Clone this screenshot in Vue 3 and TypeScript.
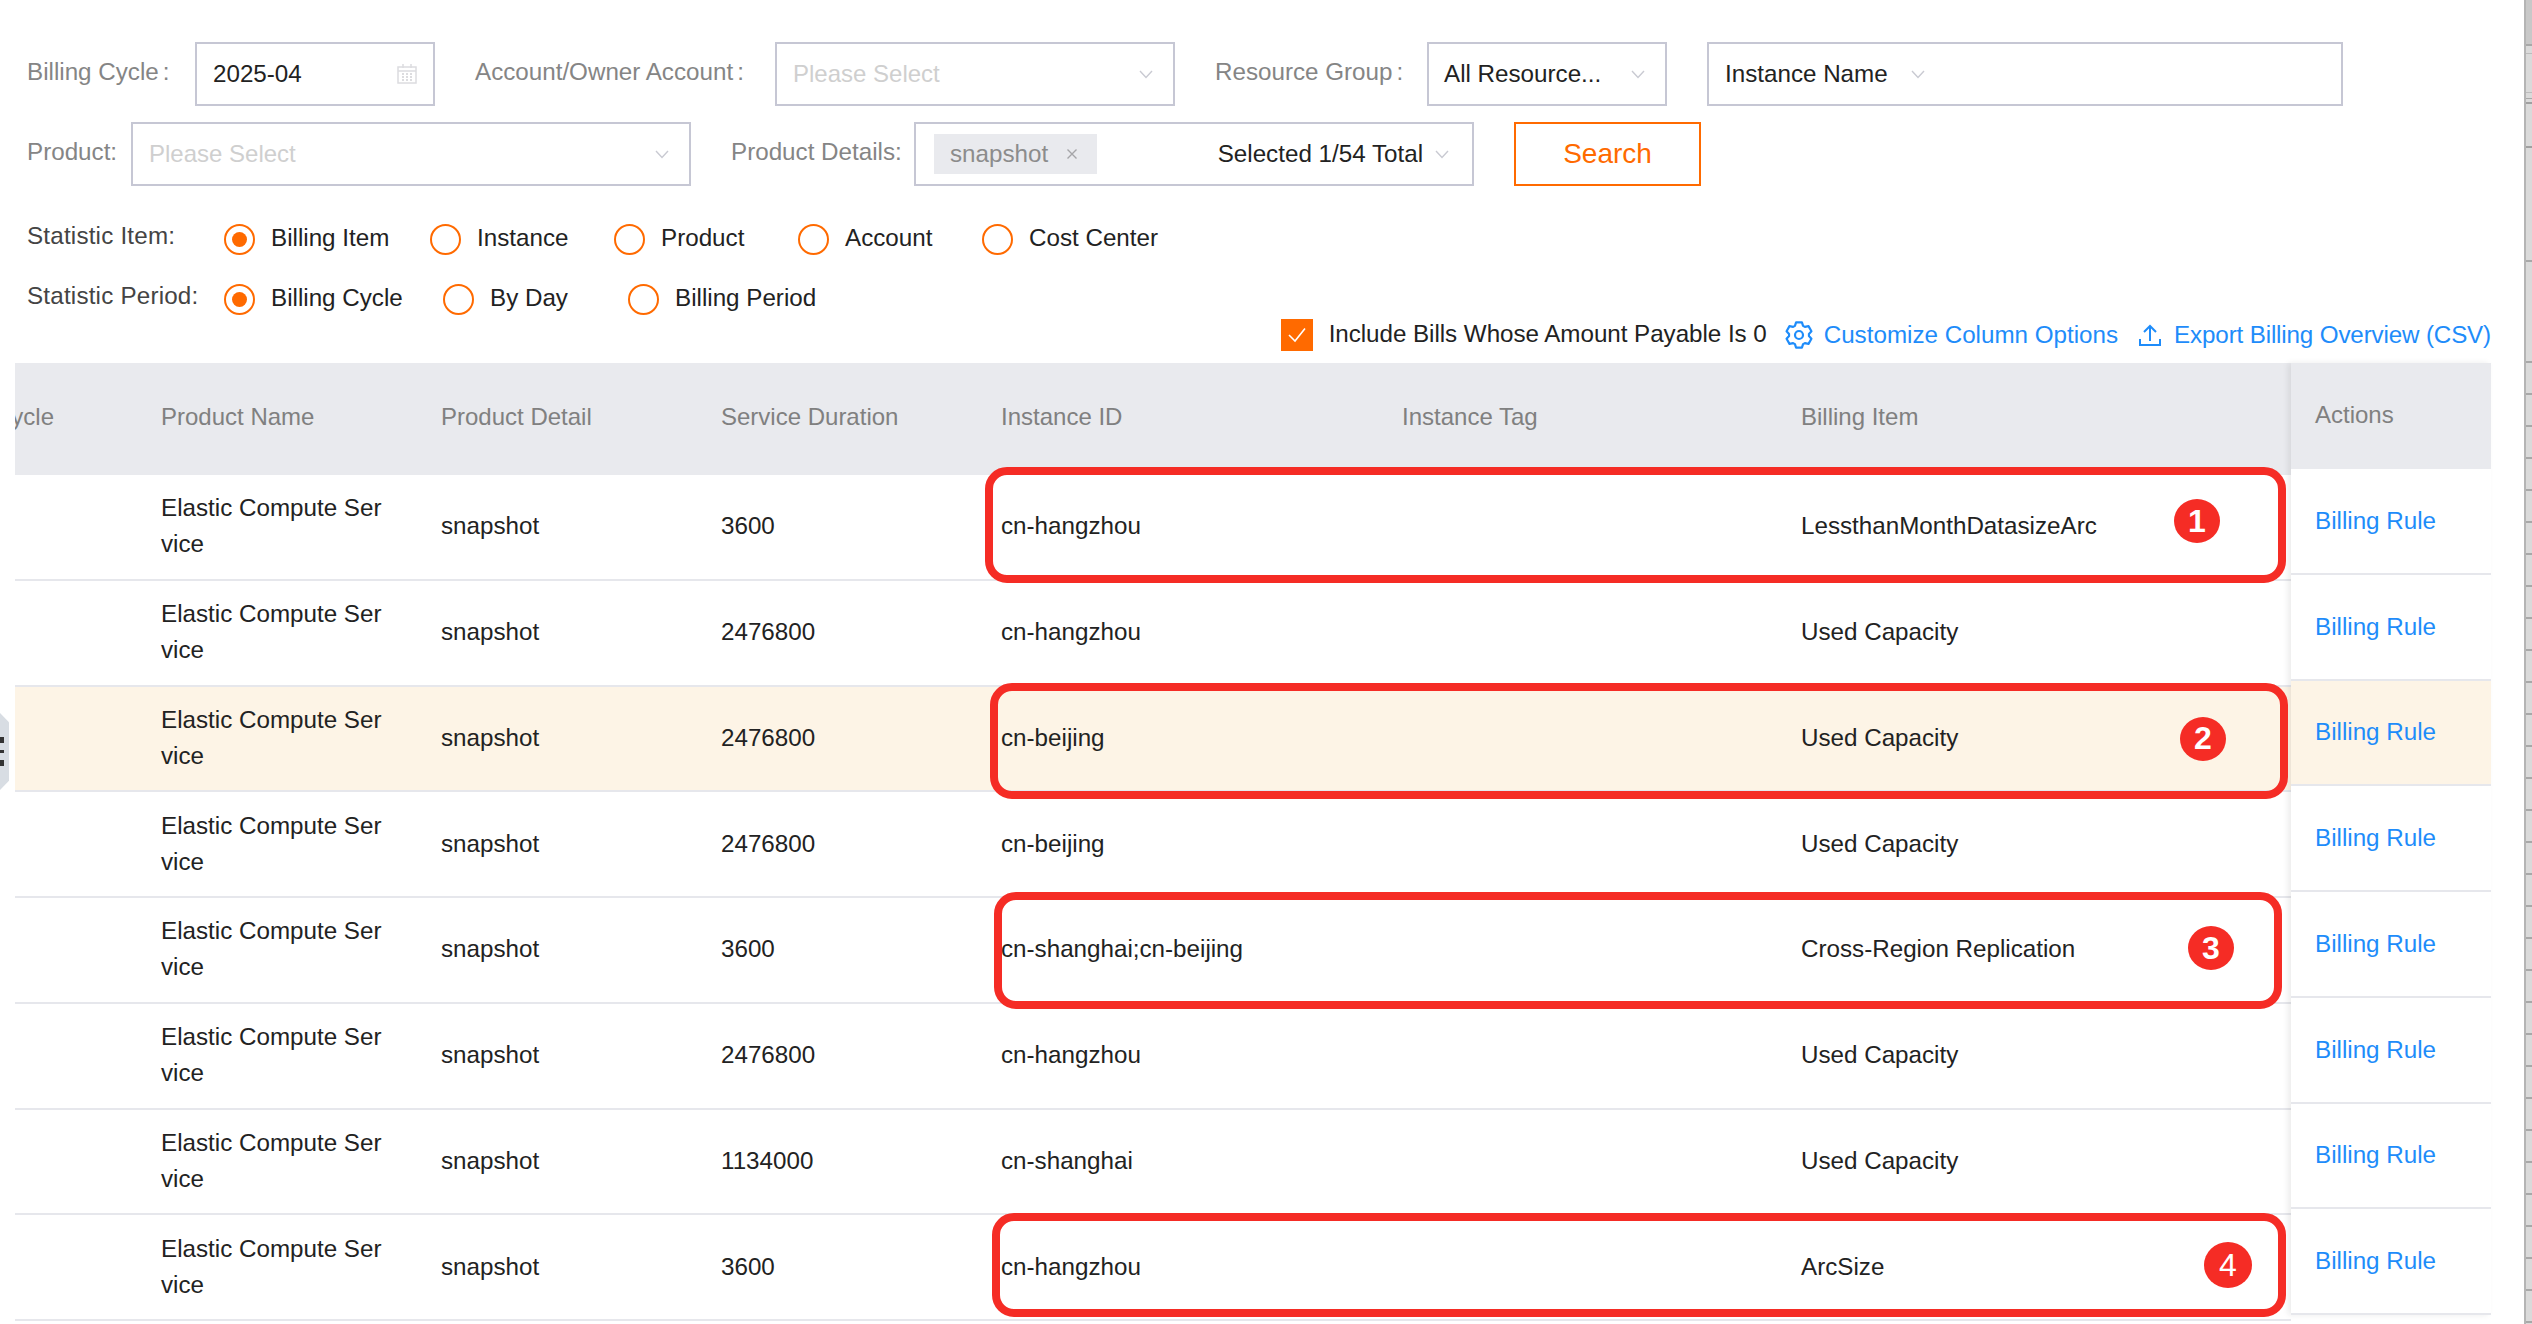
<script setup lang="ts">
interface Row {
  duration: string
  instance: string
  item: string
  active?: boolean
}

const rows: Row[] = [
  { duration: '3600', instance: 'cn-hangzhou', item: 'LessthanMonthDatasizeArc' },
  { duration: '2476800', instance: 'cn-hangzhou', item: 'Used Capacity' },
  { duration: '2476800', instance: 'cn-beijing', item: 'Used Capacity', active: true },
  { duration: '2476800', instance: 'cn-beijing', item: 'Used Capacity' },
  { duration: '3600', instance: 'cn-shanghai;cn-beijing', item: 'Cross-Region Replication' },
  { duration: '2476800', instance: 'cn-hangzhou', item: 'Used Capacity' },
  { duration: '1134000', instance: 'cn-shanghai', item: 'Used Capacity' },
  { duration: '3600', instance: 'cn-hangzhou', item: 'ArcSize' },
]

const statisticItems = ['Billing Item', 'Instance', 'Product', 'Account', 'Cost Center']
const statisticPeriods = ['Billing Cycle', 'By Day', 'Billing Period']

// 截图上的红色标注框
const marks = [
  { n: 1, cls: 'mark-1' },
  { n: 2, cls: 'mark-2' },
  { n: 3, cls: 'mark-3' },
  { n: 4, cls: 'mark-4' },
]

// 六齿齿轮
function gearPath(cx: number, cy: number, outer: number, inner: number): string {
  const pt = (deg: number, r: number) => {
    const a = (deg * Math.PI) / 180
    return `${(cx + r * Math.cos(a)).toFixed(2)} ${(cy + r * Math.sin(a)).toFixed(2)}`
  }
  const parts: string[] = []
  for (let i = 0; i < 6; i++) {
    const c = -90 + i * 60
    parts.push(`${i === 0 ? 'M' : 'L'}${pt(c - 24, inner)}`)
    parts.push(`L${pt(c - 13, outer)}`)
    parts.push(`L${pt(c + 13, outer)}`)
    parts.push(`L${pt(c + 24, inner)}`)
  }
  return parts.join(' ') + 'Z'
}

const gear = gearPath(14, 14, 13, 10)
</script>

<template>
  <div class="page">
    <div class="form-row">
      <label class="label w-cycle">Billing Cycle<span class="colon">:</span></label>
      <div class="field w-240">
        <span class="value">2025-04</span>
        <svg class="cal" width="20" height="20" viewBox="0 0 20 20" fill="none" stroke="#dcdcdf" stroke-width="1.5">
          <rect x="1" y="3" width="18" height="16" />
          <path d="M1 7h18M6 0v4M14 0v4" />
          <path d="M5 10h2M9 10h2M13 10h2M5 13h2M9 13h2M13 13h2M5 16h2M9 16h2M13 16h2" stroke-width="2" />
        </svg>
      </div>
      <label class="label w-account">Account/Owner Account<span class="colon">:</span></label>
      <div class="field w-400">
        <span class="placeholder">Please Select</span>
        <svg class="chev" width="14" height="9" viewBox="0 0 14 9"><path d="M1 1l6 6.500L13 1" /></svg>
      </div>
      <label class="label w-group">Resource Group<span class="colon">:</span></label>
      <div class="field w-240 compact">
        <span class="value">All Resource...</span>
        <svg class="chev" width="14" height="9" viewBox="0 0 14 9"><path d="M1 1l6 6.500L13 1" /></svg>
      </div>
      <div class="field w-name">
        <span class="value">Instance Name</span>
        <svg class="chev chev-inline" width="14" height="9" viewBox="0 0 14 9"><path d="M1 1l6 6.500L13 1" /></svg>
      </div>
    </div>

    <div class="form-row second">
      <label class="label w-product">Product:</label>
      <div class="field w-560">
        <span class="placeholder">Please Select</span>
        <svg class="chev" width="14" height="9" viewBox="0 0 14 9"><path d="M1 1l6 6.500L13 1" /></svg>
      </div>
      <label class="label w-details">Product Details:</label>
      <div class="field w-560 tag-field">
        <span class="tag">
          snapshot
          <svg class="tag-x" width="12" height="12" viewBox="0 0 12 12" fill="none" stroke="#a5a5a8" stroke-width="1.4"><path d="M1.500 1.500l9 9M10.500 1.500l-9 9" /></svg>
        </span>
        <span class="value selected">Selected 1/54 Total</span>
        <svg class="chev chev-tag" width="14" height="9" viewBox="0 0 14 9"><path d="M1 1l6 6.500L13 1" /></svg>
      </div>
      <button class="search">Search</button>
    </div>

    <div class="radio-row first">
      <span class="radio-label">Statistic Item:</span>
      <div class="radios items">
        <div v-for="(r, i) in statisticItems" :key="r" class="radio">
          <span class="dot" :class="{ on: i === 0 }" /><span class="radio-text">{{ r }}</span>
        </div>
      </div>
    </div>
    <div class="radio-row next">
      <span class="radio-label">Statistic Period:</span>
      <div class="radios periods">
        <div v-for="(r, i) in statisticPeriods" :key="r" class="radio">
          <span class="dot" :class="{ on: i === 0 }" /><span class="radio-text">{{ r }}</span>
        </div>
      </div>
    </div>

    <div class="toolbar">
      <span class="check">
        <svg width="20" height="16" viewBox="0 0 20 16" fill="none" stroke="#fff" stroke-width="1.6"><path d="M2 8l6 6L18 1.500" /></svg>
      </span>
      <span class="check-text">Include Bills Whose Amount Payable Is 0</span>
      <a class="link tool-link">
        <svg width="28" height="28" viewBox="0 0 28 28" fill="none" stroke="#1e8cfa" stroke-width="2.200" stroke-linejoin="round">
          <path :d="gear" />
          <circle cx="14" cy="14" r="4" />
        </svg>
        Customize Column Options
      </a>
      <a class="link tool-link export">
        <svg width="22" height="22" viewBox="0 0 22 22" fill="none" stroke="#1e8cfa" stroke-width="2">
          <path d="M11 17V2M5 8l6-6 6 6M1 15v6h20v-6" />
        </svg>
        Export Billing Overview (CSV)
      </a>
    </div>

    <div class="table-wrap">
      <div class="table-main">
        <div class="tr thead">
          <div class="td c-cycle"><span>Billing Cycle</span></div>
          <div class="td c-name">Product Name</div>
          <div class="td c-detail">Product Detail</div>
          <div class="td c-duration">Service Duration</div>
          <div class="td c-instance">Instance ID</div>
          <div class="td c-tag">Instance Tag</div>
          <div class="td c-item">Billing Item</div>
        </div>
        <div v-for="(row, i) in rows" :key="i" class="tr tbody" :class="{ active: row.active }">
          <div class="td c-cycle"></div>
          <div class="td c-name"><span class="wrap">Elastic Compute Service</span></div>
          <div class="td c-detail">snapshot</div>
          <div class="td c-duration">{{ row.duration }}</div>
          <div class="td c-instance">{{ row.instance }}</div>
          <div class="td c-tag"></div>
          <div class="td c-item">{{ row.item }}</div>
        </div>
      </div>

      <div class="table-actions">
        <div class="act-head">Actions</div>
        <div v-for="(row, i) in rows" :key="i" class="act-row" :class="{ active: row.active }">
          <a class="link">Billing Rule</a>
        </div>
      </div>

      <div v-for="m in marks" :key="m.n" class="mark" :class="m.cls">
        <span class="badge">{{ m.n }}</span>
      </div>
    </div>

    <div class="handle">
      <span class="grip" /><span class="grip thin" /><span class="grip" />
    </div>
    <div class="edge">
      <div class="edge-top" />
      <div class="edge-rest" />
    </div>
  </div>
</template>

<style>
html,
body {
  margin: 0;
  background: #fff;
  overflow: hidden;
}
</style>

<style scoped>
.page {
  position: relative;
  width: 2532px;
  height: 1324px;
  overflow: hidden;
  padding-top: 42px;
  box-sizing: border-box;
  font-family: "Liberation Sans", Arial, sans-serif;
  font-size: 24.2px;
  color: #222;
  background: #fff;
}

.form-row {
  display: flex;
  align-items: center;
  height: 64px;
  padding-left: 27px;
}

.form-row.second {
  margin-top: 16px;
}

.label {
  color: #858585;
  flex: none;
  margin-top: -4px;
}

.colon {
  margin-left: 4px;
}

.w-cycle { width: 168px; }
.w-account { width: 300px; margin-left: 40px; }
.w-group { width: 212px; margin-left: 40px; }
.w-product { width: 104px; }
.w-details { width: 183px; margin-left: 40px; }

.field {
  position: relative;
  flex: none;
  display: flex;
  align-items: center;
  justify-content: space-between;
  height: 64px;
  box-sizing: border-box;
  border: 2px solid #c6c7d4;
  padding: 0 16px;
}

.field.compact {
  padding-left: 15px;
}

.w-240 { width: 240px; }
.w-400 { width: 400px; }
.w-560 { width: 560px; }
.w-name { width: 636px; margin-left: 40px; justify-content: flex-start; }

.value {
  color: #222;
  white-space: nowrap;
}

.placeholder {
  color: #cfcfcf;
  font-size: 24px;
}

.chev {
  fill: none;
  stroke: #c9cad2;
  stroke-width: 1.4;
  flex: none;
  margin-right: 4px;
}

.chev-inline {
  margin-left: 23px;
}

.chev-tag {
  margin-right: 7px;
}

.tag-field {
  padding-left: 18px;
}

.tag {
  display: flex;
  align-items: center;
  height: 40px;
  width: 163px;
  box-sizing: border-box;
  padding-left: 16px;
  background: #e9eaee;
  color: #8c8c8c;
}

.tag-x {
  margin-left: 18px;
}

.selected {
  margin-left: auto;
  margin-right: 12px;
}

.search {
  flex: none;
  width: 187px;
  height: 64px;
  margin-left: 40px;
  border: 2px solid #ff6a00;
  background: #fff;
  color: #ff6a00;
  font: inherit;
  font-size: 28px;
  padding: 0;
}

.radio-row {
  display: flex;
  align-items: center;
  height: 32px;
  padding-left: 27px;
}

.radio-row.first { margin-top: 37px; }
.radio-row.next { margin-top: 28px; }

.radio-label {
  width: 197px;
  flex: none;
  color: #444;
  letter-spacing: 0.2px;
  margin-top: -7px;
}

.radios {
  display: grid;
}

.radios.items { grid-template-columns: 206px 184px 184px 184px auto; }
.radios.periods { grid-template-columns: 219px 185px auto; }

.radio {
  display: flex;
  align-items: center;
  gap: 16px;
  white-space: nowrap;
}

.radio-text {
  margin-top: -3px;
}

.dot {
  position: relative;
  flex: none;
  width: 31px;
  height: 31px;
  box-sizing: border-box;
  border: 2px solid #ff6a00;
  border-radius: 50%;
}

.dot.on::after {
  content: "";
  position: absolute;
  inset: 6px;
  border-radius: 50%;
  background: #ff6a00;
}

.toolbar {
  display: flex;
  align-items: center;
  justify-content: flex-end;
  height: 32px;
  margin-top: 4px;
  padding-right: 41px;
}

.check {
  display: flex;
  align-items: center;
  justify-content: center;
  width: 32px;
  height: 32px;
  background: #ff6a00;
  margin-right: 16px;
}

.check-text {
  margin-top: -2px;
  letter-spacing: -0.04px;
}

.link {
  color: #1e8cfa;
  white-space: nowrap;
}

.tool-link {
  display: flex;
  align-items: center;
  gap: 11px;
  margin-left: 18px;
  line-height: 28px;
}

.tool-link.export {
  margin-left: 21px;
  gap: 13px;
  letter-spacing: -0.15px;
}

.table-wrap {
  position: relative;
  display: flex;
  align-items: flex-start;
  width: 2476px;
  margin: 12px 0 0 15px;
}

.table-main {
  width: 2276px;
  flex: none;
  overflow: hidden;
}

.tr {
  display: flex;
  align-items: center;
}

.thead {
  height: 112px;
  box-sizing: border-box;
  padding-bottom: 4px;
  background: #e9eaee;
  color: #808080;
  font-size: 24px;
}

.tbody {
  height: 105.75px;
  box-sizing: border-box;
  padding-bottom: 1px;
  border-bottom: 2px solid #e6e7ec;
}

.tbody.active {
  background: #fdf4e6;
}

.td {
  flex: none;
  box-sizing: border-box;
  padding-right: 20px;
}

.c-cycle {
  width: 146px;
  padding-right: 107px;
  display: flex;
  justify-content: flex-end;
  overflow: hidden;
  white-space: nowrap;
}

.c-name { width: 280px; }
.c-detail { width: 280px; }
.c-duration { width: 280px; }
.c-instance { width: 401px; }
.c-tag { width: 399px; }
.c-item { width: 490px; }

.wrap {
  display: block;
  width: 224px;
  line-height: 36px;
  word-break: break-all;
}

.table-actions {
  flex: none;
  width: 200px;
  background: #fff;
  box-shadow: -3px 0 6px rgba(0, 0, 0, 0.08);
  z-index: 1;
}

.act-head {
  display: flex;
  align-items: center;
  height: 106px;
  box-sizing: border-box;
  padding: 0 0 3px 24px;
  background: #e9eaee;
  color: #808080;
  font-size: 24px;
}

.act-row {
  display: flex;
  align-items: center;
  height: 105.75px;
  box-sizing: border-box;
  padding-left: 24px;
  border-bottom: 2px solid #e6e7ec;
  background: #fff;
}

.act-row.active {
  background: #fdf4e6;
}

/* 标注框相对 table-wrap 定位，table-wrap 起点为 (15, 362) */
.mark {
  position: absolute;
  box-sizing: border-box;
  border: 8px solid #f52c25;
  border-radius: 22px;
  z-index: 2;
}

.mark-1 { left: 970px; top: 104px; width: 1301px; height: 116px; }
.mark-2 { left: 975px; top: 320px; width: 1298px; height: 116px; }
.mark-3 { left: 979px; top: 529px; width: 1288px; height: 117px; }
.mark-4 { left: 977px; top: 850px; width: 1294px; height: 104px; }

.badge {
  position: absolute;
  top: 50%;
  transform: translateY(-50%);
  display: flex;
  align-items: center;
  justify-content: center;
  width: 46px;
  height: 44px;
  border-radius: 50%;
  background: #f52c25;
  color: #fff;
  font-size: 32px;
  font-weight: 700;
}

.mark-1 .badge { right: 58px; margin-top: -4px; }
.mark-2 .badge { right: 54px; margin-top: -2.5px; }
.mark-3 .badge { right: 40px; margin-top: -2.5px; }
.mark-4 .badge { right: 26px; width: 48px; height: 46px; font-weight: 400; }

.handle {
  position: absolute;
  left: 0;
  top: 713px;
  width: 9px;
  height: 77px;
  background: #d8dde3;
  clip-path: polygon(0 0, 100% 12%, 100% 88%, 0 100%);
  display: flex;
  flex-direction: column;
  justify-content: center;
  gap: 7px;
}

.grip {
  width: 4px;
  height: 6px;
  background: #333;
}

.grip.thin {
  height: 3px;
}

/* 右侧露出的另一窗口边缘 */
.edge {
  position: absolute;
  right: 0;
  top: 0;
  bottom: 0;
  width: 8px;
  box-sizing: border-box;
  border-left: 2px solid #b4b4b4;
  background: #dadada;
}

.edge-top {
  height: 361px;
  background: linear-gradient(
    to bottom,
    #c8c8c8 0 44px,
    #a8a8a8 44px 46px,
    #dadada 46px 53px,
    #bcbcbc 53px 54px,
    #dadada 54px 92px,
    #bcbcbc 92px 93px,
    #dadada 93px 98px,
    #a8a8a8 98px 99px,
    #dadada 99px 102px,
    #a0a0a0 102px 104px,
    #dadada 104px 146px,
    #a0a0a0 146px 148px,
    #dadada 148px 260px,
    #a8a8a8 260px 262px,
    #dadada 262px
  );
}

.edge-rest {
  height: 963px;
  background: repeating-linear-gradient(to bottom, #a8a8a8 0 2px, #dadada 2px 32px);
}
</style>
